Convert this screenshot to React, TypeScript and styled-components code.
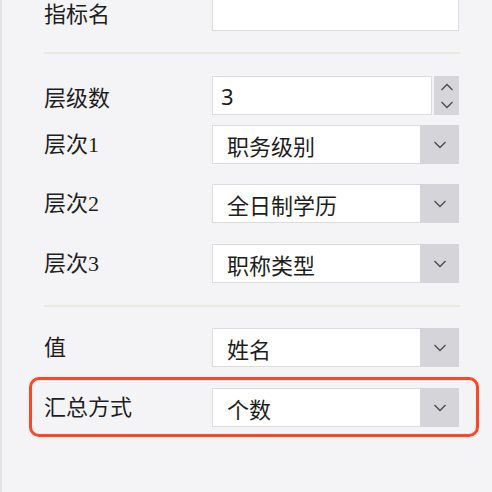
import React from 'react';
import styled, { createGlobalStyle } from 'styled-components';

const GlobalStyle = createGlobalStyle`
  html, body {
    margin: 0;
    padding: 0;
    background: #f4f4f6;
  }
  body {
    font-family: "Noto Sans CJK SC", "Noto Sans", sans-serif;
    color: #1e1e1e;
  }
`;

const Page = styled.div`
  height: 492px;
  overflow: hidden;
  border-left: 2px solid #e3e3e6;
  padding: 0 33px 0 42px;
`;

const Row = styled.div<{ $top: number }>`
  display: grid;
  grid-template-columns: 168px 247px;
  align-items: center;
  height: 39px;
  margin-top: ${(p) => p.$top}px;
`;

const Label = styled.div<{ $serif?: boolean }>`
  font-size: 22px;
  line-height: 26px;
  font-family: ${(p) =>
    p.$serif
      ? '"Liberation Serif", "Noto Sans CJK SC", serif'
      : '"Noto Sans CJK SC", sans-serif'};
`;

const Divider = styled.div<{ $top: number }>`
  height: 2px;
  width: 416px;
  background: #ebe8dd;
  margin-top: ${(p) => p.$top}px;
`;

const TextBox = styled.div`
  box-sizing: border-box;
  height: 39px;
  background: #fff;
  border: 1px solid #dcdcde;
  display: flex;
  align-items: center;
  padding-left: 8px;
  font-size: 22px;
`;

const NumberField = styled.div`
  display: flex;
  gap: 2px;
  height: 39px;
`;

const NumberInput = styled(TextBox)`
  flex: 1;
  font-family: "Noto Sans", sans-serif;
`;

const Spinner = styled.div`
  width: 25px;
  background: #d6d6da;
  display: flex;
  flex-direction: column;
  align-items: center;
  justify-content: space-between;
  padding: 7px 0 6px;
  box-sizing: border-box;
`;

const SelectBox = styled.div`
  box-sizing: border-box;
  display: flex;
  height: 39px;
  border: 1px solid #dcdcde;
  border-right: none;
  background: #fff;
`;

const SelectValue = styled.div<{ $serif?: boolean }>`
  flex: 1;
  display: flex;
  align-items: center;
  padding-left: 14px;
  font-size: 22px;
  font-family: ${(p) =>
    p.$serif
      ? '"Liberation Serif", "Noto Sans CJK SC", serif'
      : '"Noto Sans CJK SC", sans-serif'};
`;

const ArrowCell = styled.div`
  width: 39px;
  margin: -1px 0;
  background: #d5d5d9;
  display: flex;
  align-items: center;
  justify-content: center;
`;

const Highlight = styled.div`
  margin: 10px -20px 0 -15px;
  padding: 8px 17px 7px 12px;
  border: 3px solid #ff4524;
  border-radius: 10px;
`;

const Chevron = ({ up }: { up?: boolean }) => (
  <svg width="14" height="8" viewBox="0 0 14 8">
    <path
      d={up ? 'M1.5 7 L7 1.5 L12.5 7' : 'M1.5 1 L7 6.5 L12.5 1'}
      fill="none"
      stroke="#4a4a4e"
      strokeWidth="1.3"
    />
  </svg>
);

const Select = ({ value, serif }: { value: string; serif?: boolean }) => (
  <SelectBox>
    <SelectValue $serif={serif}>{value}</SelectValue>
    <ArrowCell>
      <Chevron />
    </ArrowCell>
  </SelectBox>
);

export default function App() {
  return (
    <>
      <GlobalStyle />
      <Page>
        <Row $top={-8}>
          <Label>指标名</Label>
          <TextBox />
        </Row>
        <Divider $top={21} />
        <Row $top={22}>
          <Label>层级数</Label>
          <NumberField>
            <NumberInput>3</NumberInput>
            <Spinner>
              <Chevron up />
              <Chevron />
            </Spinner>
          </NumberField>
        </Row>
        <Row $top={10}>
          <Label $serif>层次1</Label>
          <Select value="职务级别" />
        </Row>
        <Row $top={20}>
          <Label $serif>层次2</Label>
          <Select value="全日制学历" serif />
        </Row>
        <Row $top={21}>
          <Label $serif>层次3</Label>
          <Select value="职称类型" />
        </Row>
        <Divider $top={22} />
        <Row $top={21}>
          <Label $serif>值</Label>
          <Select value="姓名" serif />
        </Row>
        <Highlight>
          <Row $top={0}>
            <Label $serif>汇总方式</Label>
            <Select value="个数" serif />
          </Row>
        </Highlight>
      </Page>
    </>
  );
}
